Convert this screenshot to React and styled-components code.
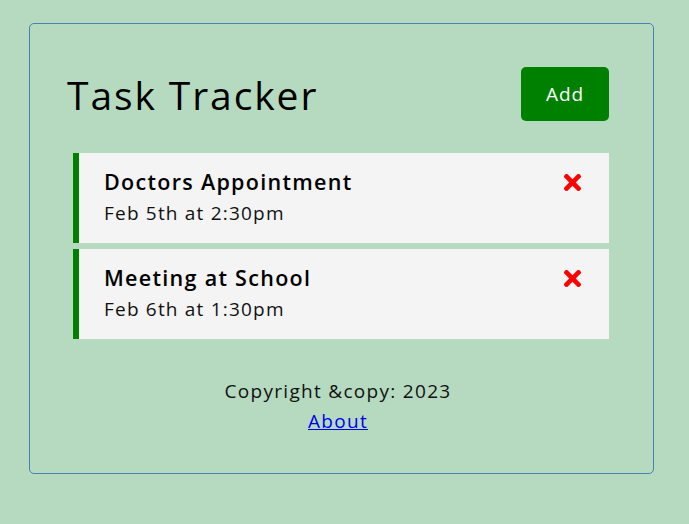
import React from "react";
import styled, { createGlobalStyle } from "styled-components";
import { FaTimes } from "react-icons/fa";

const GlobalStyle = createGlobalStyle`
  * { box-sizing: border-box; }
  body {
    margin: 0;
    background: #b5dabf;
    font-family: "Open Sans", "Noto Sans", sans-serif;
  }
`;

const Container = styled.div`
  width: 625px;
  height: 451px;
  margin: 23px 0 0 29px;
  padding: 43px 44px 0 37px;
  border: 1px solid steelblue;
  border-radius: 5px;
`;

const Header = styled.header`
  display: flex;
  justify-content: space-between;
  align-items: center;
`;

const Title = styled.h1`
  margin: 0;
  font-size: 39px;
  font-weight: 400;
  color: #000;
  letter-spacing: 1.9px;
`;

const Button = styled.button`
  width: 88px;
  height: 54px;
  border: none;
  border-radius: 5px;
  background: ${(p) => p.$color || "green"};
  color: #fff;
  font-family: inherit;
  font-size: 19px;
  letter-spacing: 0.9px;
  cursor: pointer;
`;

const TaskList = styled.div`
  display: flex;
  flex-direction: column;
  gap: 6px;
  margin: 32px 0 0 6px;
`;

const TaskItem = styled.div`
  height: 90px;
  padding: 14px 24px 0 25px;
  background: #f4f4f4;
  border-left: ${(p) => (p.$reminder ? "6px solid green" : "none")};
`;

const TaskTitle = styled.h3`
  display: flex;
  justify-content: space-between;
  align-items: center;
  margin: 0;
  font-size: 21.5px;
  font-weight: 600;
  line-height: 30px;
  letter-spacing: 1.3px;
  color: #000;
`;

const TaskDay = styled.p`
  margin: 0;
  font-size: 19px;
  line-height: 32px;
  letter-spacing: 1.2px;
  color: #111;
`;

const DeleteIcon = styled(FaTimes)`
  color: red;
  font-size: 25px;
  cursor: pointer;
`;

const Footer = styled.footer`
  margin-top: 37px;
  text-align: center;
  font-size: 19px;
  line-height: 30px;
  letter-spacing: 1.3px;
  color: #111;
`;

const FooterText = styled.p`
  margin: 0;
`;

const FooterLink = styled.a`
  display: inline-block;
  color: #0000ee;
  text-decoration: underline;
`;

const tasks = [
  { id: 1, text: "Doctors Appointment", day: "Feb 5th at 2:30pm", reminder: true },
  { id: 2, text: "Meeting at School", day: "Feb 6th at 1:30pm", reminder: true },
];

export default function App() {
  return (
    <>
      <GlobalStyle />
      <Container>
        <Header>
          <Title>Task Tracker</Title>
          <Button $color="green">Add</Button>
        </Header>
        <TaskList>
          {tasks.map((t) => (
            <TaskItem key={t.id} $reminder={t.reminder}>
              <TaskTitle>
                {t.text}
                <DeleteIcon />
              </TaskTitle>
              <TaskDay>{t.day}</TaskDay>
            </TaskItem>
          ))}
        </TaskList>
        <Footer>
          <FooterText>Copyright &amp;copy: 2023</FooterText>
          <FooterLink href="#">About</FooterLink>
        </Footer>
      </Container>
    </>
  );
}
